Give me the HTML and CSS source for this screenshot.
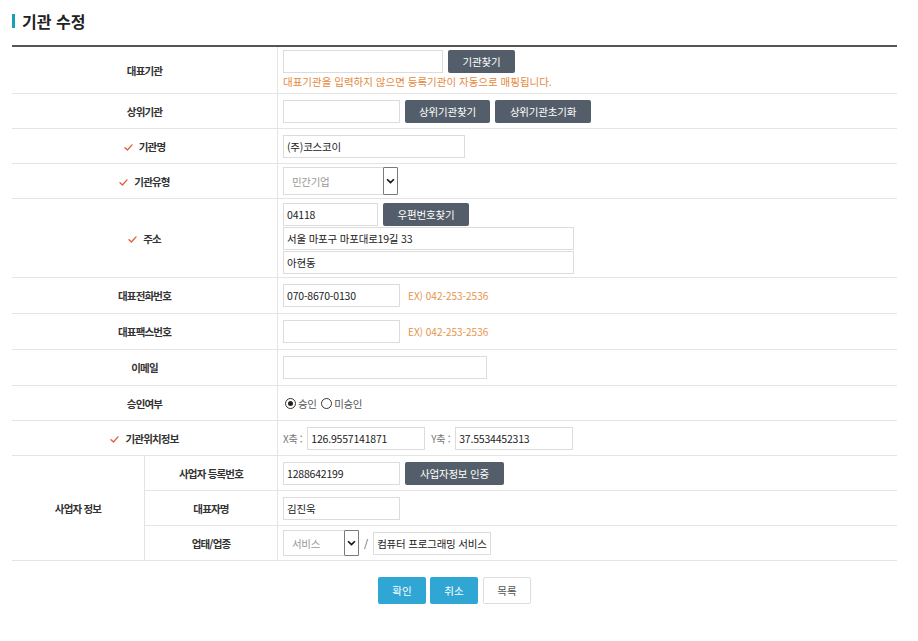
FILE: index.html
```html
<!DOCTYPE html>
<html lang="ko">
<head>
<meta charset="utf-8">
<title>기관 수정</title>
<link rel="stylesheet" href="styles.css">
</head>
<body>
<div class="page">
  <h2 class="title"><span class="bar"></span>기관 수정</h2>
  <div class="form">
    <div class="lab r1">대표기관</div>
    <div class="val r1 stack">
      <div class="line"><span class="inp w160"></span><button class="btn w67">기관찾기</button></div>
      <p class="notice">대표기관을 입력하지 않으면 등록기관이 자동으로 매핑됩니다.</p>
    </div>

    <div class="lab">상위기관</div>
    <div class="val"><span class="inp w117"></span><button class="btn w85">상위기관찾기</button><button class="btn w96">상위기관초기화</button></div>

    <div class="lab"><svg class="chk" viewBox="0 0 10 8"><path d="M1 4.2 L3.8 6.8 L9 1" fill="none" stroke="#e2613b" stroke-width="1.6" stroke-linecap="round" stroke-linejoin="round"/></svg>기관명</div>
    <div class="val"><span class="inp w182">(주)코스코이</span></div>

    <div class="lab"><svg class="chk" viewBox="0 0 10 8"><path d="M1 4.2 L3.8 6.8 L9 1" fill="none" stroke="#e2613b" stroke-width="1.6" stroke-linecap="round" stroke-linejoin="round"/></svg>기관유형</div>
    <div class="val"><span class="sel s115"><span class="ph">민간기업</span><span class="arr"><svg viewBox="0 0 10 6"><path d="M1.2 1 L5 4.8 L8.8 1" fill="none" stroke="#111" stroke-width="1.8"/></svg></span></span></div>

    <div class="lab r5"><svg class="chk" viewBox="0 0 10 8"><path d="M1 4.2 L3.8 6.8 L9 1" fill="none" stroke="#e2613b" stroke-width="1.6" stroke-linecap="round" stroke-linejoin="round"/></svg>주소</div>
    <div class="val r5 stack addr">
      <div class="line"><span class="inp w95">04118</span><button class="btn w86">우편번호찾기</button></div>
      <span class="inp w291">서울 마포구 마포대로19길 33</span>
      <span class="inp w291">아현동</span>
    </div>

    <div class="lab">대표전화번호</div>
    <div class="val"><span class="inp w117">070-8670-0130</span><span class="ex">EX) 042-253-2536</span></div>

    <div class="lab">대표팩스번호</div>
    <div class="val"><span class="inp w117"></span><span class="ex">EX) 042-253-2536</span></div>

    <div class="lab">이메일</div>
    <div class="val"><span class="inp w204"></span></div>

    <div class="lab">승인여부</div>
    <div class="val"><span class="radio on"></span><span class="rtxt">승인</span><span class="radio"></span><span class="rtxt">미승인</span></div>

    <div class="lab"><svg class="chk" viewBox="0 0 10 8"><path d="M1 4.2 L3.8 6.8 L9 1" fill="none" stroke="#e2613b" stroke-width="1.6" stroke-linecap="round" stroke-linejoin="round"/></svg>기관위치정보</div>
    <div class="val"><span class="axis">X축 :</span><span class="inp w118">126.9557141871</span><span class="axis ay">Y축 :</span><span class="inp w118">37.5534452313</span></div>

    <div class="lab biz">사업자 정보</div>
    <div class="lab sub">사업자 등록번호</div>
    <div class="val"><span class="inp w117">1288642199</span><button class="btn w99">사업자정보 인증</button></div>

    <div class="lab sub">대표자명</div>
    <div class="val"><span class="inp w117">김진욱</span></div>

    <div class="lab sub">업태/업종</div>
    <div class="val"><span class="sel s76"><span class="ph">서비스</span><span class="arr"><svg viewBox="0 0 10 6"><path d="M1.2 1 L5 4.8 L8.8 1" fill="none" stroke="#111" stroke-width="1.8"/></svg></span></span><span class="slash">/</span><span class="inp w118 clip">컴퓨터 프로그래밍 서비스</span></div>
  </div>

  <div class="actions">
    <button class="abtn blue">확인</button>
    <button class="abtn blue">취소</button>
    <button class="abtn white">목록</button>
  </div>
</div>
</body>
</html>
```

FILE: styles.css
```css
* { box-sizing: border-box; }
html, body { margin: 0; padding: 0; background: #fff; }
body {
  font-family: "Noto Sans CJK KR", "Noto Sans", "Liberation Sans", sans-serif;
  color: #333;
}
.page { padding: 0 21px 0 12px; width: 918px; }

.title {
  margin: 0;
  padding-top: 9px;
  height: 45px;
  display: flex;
  align-items: flex-start;
  font-size: 16px;
  line-height: 24px;
  font-weight: 700;
  color: #222;
  letter-spacing: 0;
}
.title .bar {
  width: 3px;
  height: 14px;
  background: #1aa0b5;
  margin: 5px 7px 0 0;
}

.form {
  width: 885px;
  display: grid;
  grid-template-columns: 133px 133px 1fr;
  grid-template-rows: 47px 35px 35px 35px 79px 36px 36px 36px 35px 35px 35px 35px 35px;
  border-top: 2px solid #555;
}
.lab {
  grid-column: 1 / 3;
  border-right: 1px solid #e4e4e4;
  border-bottom: 1px solid #e4e4e4;
  display: flex;
  align-items: center;
  justify-content: center;
  font-size: 10.5px;
  font-weight: 700;
  letter-spacing: -0.8px;
  color: #333;
}
.lab.biz { grid-column: 1; grid-row: 11 / 14; }
.lab.sub { grid-column: 2; }
.val {
  border-bottom: 1px solid #e4e4e4;
  display: flex;
  align-items: center;
  padding-left: 5px;
  font-size: 10.5px;
}
.val.stack { flex-direction: column; align-items: flex-start; justify-content: flex-start; padding-top: 3px; }
.val.addr { padding-top: 4px; gap: 1px; }
.line { display: flex; align-items: center; }

.chk { width: 9px; height: 7px; margin-right: 6px; margin-top: 3px; }

.inp {
  display: inline-flex;
  align-items: center;
  height: 23px;
  border: 1px solid #dcdcdc;
  padding: 0 3px;
  font-size: 10.5px;
  color: #222;
  letter-spacing: -0.2px;
  background: #fff;
  white-space: nowrap;
  overflow: hidden;
}
.w95 { width: 95px; }
.w117 { width: 117px; }
.w118 { width: 118px; }
.w160 { width: 160px; }
.w182 { width: 182px; }
.w204 { width: 204px; }
.w291 { width: 291px; }
.clip { text-overflow: clip; }

.btn {
  height: 23px;
  border: 0;
  border-radius: 2px;
  background: #545e6a;
  color: #fff;
  font-family: inherit;
  font-size: 10.5px;
  letter-spacing: -0.2px;
  padding: 0;
  margin-left: 5px;
}
.w67 { width: 67px; }
.w85 { width: 85px; }
.w86 { width: 86px; }
.w96 { width: 96px; }
.w99 { width: 99px; }

.notice {
  margin: 2px 0 0 0;
  font-size: 10.5px;
  line-height: 14px;
  color: #e5883b;
  letter-spacing: 0;
}
.ex { margin-left: 8px; color: #e8934a; font-size: 10px; }

.sel {
  display: inline-flex;
  align-items: center;
  height: 28px;
  border: 1px solid #dcdcdc;
  background: #fff;
}
.s115 { width: 115px; }
.s76 { width: 76px; height: 26px; }
.sel .ph { padding-left: 8px; color: #999; font-size: 10.5px; letter-spacing: -0.3px; }
.sel .arr {
  margin-left: auto;
  width: 15px;
  height: calc(100% + 2px);
  margin-top: -1px;
  margin-bottom: -1px;
  margin-right: -1px;
  border: 1px solid #7a7a7a;
  border-radius: 1px;
  background: #fff;
  display: flex;
  align-items: center;
  justify-content: center;
}
.sel .arr svg { width: 9px; height: 6px; }
.slash { margin: 0 5px; color: #555; font-size: 10.5px; }

.radio {
  width: 11px;
  height: 11px;
  border: 1px solid #333;
  border-radius: 50%;
  margin-left: 2px;
  display: inline-flex;
  align-items: center;
  justify-content: center;
}
.radio.on::after {
  content: "";
  width: 5px;
  height: 5px;
  border-radius: 50%;
  background: #222;
}
.rtxt { margin-left: 2px; margin-right: 3px; color: #555; font-size: 10.5px; letter-spacing: -0.5px; }

.axis { color: #777; font-size: 10px; margin-right: 5px; letter-spacing: -0.3px; }
.axis.ay { margin-left: 6px; }

.actions {
  width: 885px;
  display: flex;
  justify-content: center;
  gap: 4px;
  padding-top: 16px;
}
.abtn {
  width: 48px;
  height: 27px;
  border-radius: 2px;
  font-family: inherit;
  font-size: 10.5px;
  padding: 0;
}
.abtn.blue { background: #2fa6d4; border: 0; color: #fff; }
.abtn.white { background: #fff; border: 1px solid #ddd; color: #555; margin-left: 1px; }
```
